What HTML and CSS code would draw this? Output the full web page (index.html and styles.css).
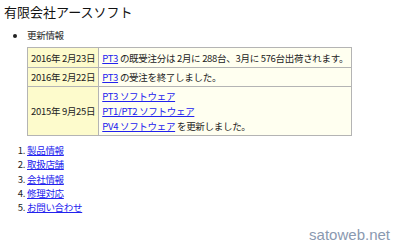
FILE: index.html
```html
<!DOCTYPE html>
<html lang="ja">
<head>
  <meta charset="UTF-8">
  <title>有限会社アースソフト</title>
  <link rel="stylesheet" href="styles.css">
</head>
<body>
  <h1>有限会社アースソフト</h1>
  <ul class="news">
    <li>更新情報
      <table class="updates">
        <tr>
          <td class="date">2016年 2月23日</td>
          <td><a href="#">PT3</a> の既受注分は 2月に 288台、3月に 576台出荷されます。</td>
        </tr>
        <tr>
          <td class="date">2016年 2月22日</td>
          <td><a href="#">PT3</a> の受注を終了しました。</td>
        </tr>
        <tr>
          <td class="date">2015年 9月25日</td>
          <td><a href="#">PT3 ソフトウェア</a><br><a href="#">PT1/PT2 ソフトウェア</a><br><a href="#">PV4 ソフトウェア</a> を更新しました。</td>
        </tr>
      </table>
    </li>
  </ul>
  <ol class="menu">
    <li><a href="#">製品情報</a></li>
    <li><a href="#">取扱店舗</a></li>
    <li><a href="#">会社情報</a></li>
    <li><a href="#">修理対応</a></li>
    <li><a href="#">お問い合わせ</a></li>
  </ol>
  <div class="mark">satoweb.net</div>
</body>
</html>
```

FILE: styles.css
```css
body { margin: 0 4px; font-family: "Noto Sans CJK JP", sans-serif; font-size: 9.5px; letter-spacing: -0.3px; color: #222; background: #fff; }
h1 { font-size: 13px; font-weight: normal; letter-spacing: 0; margin: 3px 0 0; line-height: 18px; color: #111; }
a { color: #2222ee; }

.news { margin: 7px 0 0; padding-left: 23px; line-height: 14px; }
.updates { border-collapse: collapse; margin-top: 5px; width: 320px; }
.updates td { border: 1px solid #b4b4b4; background: #fffff0; padding: 2px 3px 1px; line-height: 15px; white-space: nowrap; }
.updates tr:first-child td { padding: 3px 3px 1px; }
.updates td.date { background: #fdfbcc; text-align: center; width: 62px; }

.menu { margin: 7px 0 0; padding-left: 23px; line-height: 14.3px; }

.mark { position: absolute; right: 10px; bottom: 4px; font-family: "Liberation Sans", Arial, sans-serif; font-size: 15px; letter-spacing: 0; color: #8a99b0; }
```
